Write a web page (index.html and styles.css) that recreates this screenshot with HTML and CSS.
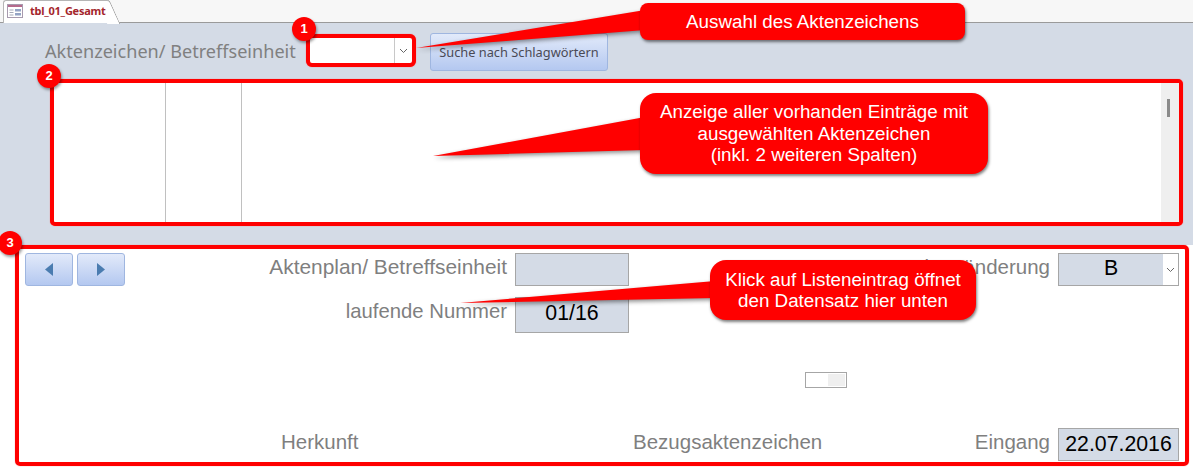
FILE: index.html
```html
<!DOCTYPE html>
<html lang="de">
<head>
<meta charset="utf-8">
<title>tbl_01_Gesamt</title>
<link rel="stylesheet" href="styles.css">
</head>
<body>
<div class="page">
  <div class="tabbar">
    <div class="tab">
      <svg class="tab-icon" width="16" height="14" viewBox="0 0 16 14">
        <rect x="0.5" y="0.5" width="15" height="13" fill="#fff" stroke="#a79aae"/>
        <rect x="1" y="1" width="14" height="2" fill="#b56a8c"/>
        <path d="M2.5 6h4M2.5 8.500h4M2.5 11h4" stroke="#a4a8b6" fill="none"/>
        <rect x="8" y="5" width="6" height="2.500" fill="#93a3c4"/>
        <rect x="8" y="9" width="6" height="2.500" fill="#93a3c4"/>
      </svg>
      <span>tbl_01_Gesamt</span>
    </div>
  </div>

  <header class="head">
    <div class="search-row">
      <span class="head-label">Aktenzeichen/ Betreffseinheit</span>
      <div class="frame-combo">
        <div class="combo-value"></div>
        <div class="combo-arrow">
          <svg width="9" height="6" viewBox="0 0 9 6"><path d="M1 1l3.500 3.500L8 1" fill="none" stroke="#666"/></svg>
        </div>
      </div>
      <button class="search-btn" type="button">Suche nach Schlagwörtern</button>
    </div>
    <div class="list-frame">
      <div class="list-col"></div>
      <div class="list-col"></div>
      <div class="list-col list-col-main"></div>
      <div class="scrollbar"><div class="thumb"></div></div>
    </div>
  </header>

  <main class="form-wrap">
    <div class="form-frame">
      <div class="cell-first">
        <div class="nav">
          <button class="nav-btn" type="button" aria-label="Zurück">
            <svg width="8" height="13" viewBox="0 0 8 13"><path d="M8 0v13L0 6.500z" fill="#4a7cb0"/></svg>
          </button>
          <button class="nav-btn" type="button" aria-label="Weiter">
            <svg width="8" height="13" viewBox="0 0 8 13"><path d="M0 0v13l8-6.500z" fill="#4a7cb0"/></svg>
          </button>
        </div>
        <span class="label label-plan">Aktenplan/ Betreffseinheit</span>
      </div>
      <div class="field"></div>
      <span class="label label-end">Aktenänderung</span>
      <div class="field field-combo">
        <span class="field-text">B</span>
        <div class="field-arrow">
          <svg width="9" height="6" viewBox="0 0 9 6"><path d="M1 1l3.500 3.500L8 1" fill="none" stroke="#666"/></svg>
        </div>
      </div>

      <span class="label label-end label-num">laufende Nummer</span>
      <div class="field field-text-center field-number">01/16</div>
      <div class="spacer-cell"></div>

      <div class="toggle"><div class="toggle-thumb"></div></div>

      <span class="label label-herkunft">Herkunft</span>
      <div class="bottom-mid">
        <span class="label">Bezugsaktenzeichen</span>
        <span class="label">Eingang</span>
      </div>
      <div class="field field-text-center">22.07.2016</div>
    </div>
  </main>

  <svg class="pointers" width="1193" height="468" viewBox="0 0 1193 468">
    <polygon points="416,48 645,10 645,30"/>
    <polygon points="433,156 645,117 645,150"/>
    <polygon points="460,303 715,281 715,298"/>
  </svg>
  <div class="callout callout-1">Auswahl des Aktenzeichens</div>
  <div class="callout callout-2">Anzeige aller vorhanden Einträge mit<br>ausgewählten Aktenzeichen<br>(inkl. 2 weiteren Spalten)</div>
  <div class="callout callout-3">Klick auf Listeneintrag öffnet<br>den Datensatz hier unten</div>
  <div class="badge badge-1">1</div>
  <div class="badge badge-2">2</div>
  <div class="badge badge-3">3</div>
</div>
</body>
</html>
```
FILE: styles.css
```css
* { box-sizing: border-box; }
html, body { margin: 0; padding: 0; background: #fff; }
body { font-family: "Liberation Sans", Arial, sans-serif; }
.page { position: relative; width: 1193px; height: 468px; overflow: hidden; }

.tabbar {
  height: 23px;
  background: #f7f7f7;
  border-bottom: 1px solid #9a9a9a;
  padding-left: 3px;
}
.tab {
  position: relative;
  display: flex;
  align-items: center;
  gap: 7px;
  width: 106px;
  height: 23px;
  padding: 0 0 3px 3px;
  background: #fff;
  border: 1px solid #b5b5b5;
  border-right: 0;
  border-bottom: 0;
  border-radius: 3px 0 0 0;
  font: bold 11px "Noto Sans", sans-serif;
  letter-spacing: -0.25px;
  color: #a4262c;
  white-space: nowrap;
}
.tab::after {
  content: "";
  position: absolute;
  top: -1px;
  right: -6px;
  width: 12px;
  height: 23px;
  background: #fff;
  border-right: 1px solid #9a9a9a;
  border-top: 1px solid #b5b5b5;
  border-radius: 0 3px 0 0;
  transform: skewX(24deg);
}
.tab span { position: relative; z-index: 1; }
.tab-icon { flex: none; }

.head {
  height: 222px;
  background: #d4dbe6;
  padding: 10px 10px 0 50px;
}
.search-row { display: flex; align-items: flex-start; height: 46px; }
.head-label {
  width: 261px;
  margin: 5px 0 0 -5px;
  font: 18.100px "Noto Sans", sans-serif;
  line-height: 26px;
  color: #808080;
  white-space: nowrap;
}
.frame-combo {
  display: flex;
  width: 110px;
  height: 33px;
  margin-top: 1px;
  border: 4px solid #f00;
  border-radius: 6px;
  background: #fff;
  box-shadow: 0 0 1px #f55;
}
.combo-value { flex: 1; }
.combo-arrow {
  width: 18px;
  display: flex;
  align-items: center;
  justify-content: center;
  border-left: 1px solid #c8c8c8;
}
.search-btn {
  margin-left: 14px;
  width: 178px;
  height: 38px;
  padding: 0;
  border: 1px solid #9fb6e0;
  border-radius: 3px;
  background: linear-gradient(#e2eafa, #b4c8f0);
  font: 12.800px "Noto Sans", sans-serif;
  color: #4a4a55;
}

.list-frame {
  display: grid;
  grid-template-columns: 112px 76px 1fr 18px;
  width: 1133px;
  height: 147px;
  background: #fff;
  border: 4px solid #f00;
  border-radius: 5px;
  box-shadow: 0 0 1px #f55;
}
.list-col { border-right: 1px solid #c0c0c0; }
.list-col-main { border-right: 0; }
.scrollbar { background: #efefef; padding: 16px 6px 0 6px; }
.thumb { width: 3px; height: 18px; background: #8a8a8a; }

.form-wrap { height: 223px; padding: 0 4px 2px 15px; background: #fff; }
.form-frame {
  display: grid;
  grid-template-columns: 482px 114px 413px 121px;
  grid-template-rows: 33px 34px auto 33px;
  column-gap: 8px;
  row-gap: 13px;
  height: 221px;
  padding: 4px 0 0 6px;
  border: 4px solid #f00;
  border-radius: 5px;
  box-shadow: 0 0 1px #f55;
  align-content: start;
}
.cell-first { display: flex; justify-content: space-between; align-items: flex-start; }
.nav { display: flex; gap: 4px; }
.nav-btn {
  width: 48px;
  height: 33px;
  padding: 0;
  border: 1px solid #9fb6e0;
  border-radius: 3px;
  background: linear-gradient(#e2eafa, #b4c8f0);
  display: flex;
  align-items: center;
  justify-content: center;
}
.label {
  font-size: 20.500px;
  line-height: 28px;
  color: #7f7f7f;
  white-space: nowrap;
}
.label-plan { font-size: 20.900px; }
.label-end { text-align: right; }
.label-num { font-size: 20.300px; line-height: 24px; }
.field {
  background: #d4dbe6;
  border: 1px solid #a6a6a6;
  color: #000;
  font-size: 21.300px;
}
.field-text-center { display: flex; align-items: center; justify-content: center; }
.field-number { margin-top: -2px; padding-bottom: 3px; }
.field-combo { display: flex; }
.field-text { flex: 1; text-align: center; line-height: 28px; }
.field-arrow {
  width: 15px;
  background: #fff;
  display: flex;
  align-items: center;
  justify-content: center;
}
.spacer-cell { grid-column: span 2; }

.toggle {
  grid-column: 3;
  margin: 26px 0 27px 168px;
  width: 42px;
  height: 16px;
  border: 1px solid #a6a6a6;
  background: #fff;
  padding: 1px 1px 1px 22px;
}
.toggle-thumb { height: 100%; background: #efefef; }

.label-herkunft { grid-column: 1; padding-left: 256px; }
.bottom-mid {
  grid-column: 2 / span 2;
  display: flex;
  justify-content: space-between;
  padding-left: 118px;
}

.pointers { position: absolute; left: 0; top: 0; pointer-events: none; filter: drop-shadow(1px 2px 2px rgba(0,0,0,.45)); }
.pointers polygon { fill: #f00; }

.callout {
  position: absolute;
  display: flex;
  align-items: center;
  justify-content: center;
  text-align: center;
  background: #f00;
  color: #fff;
  font-size: 18.800px;
  line-height: 21.500px;
  box-shadow: 1px 2px 3px rgba(0,0,0,.5);
}
.callout-1 { left: 640px; top: 3px; width: 325px; height: 37px; border-radius: 8px; }
.callout-2 { left: 640px; top: 93px; width: 348px; height: 81px; border-radius: 16px; }
.callout-3 { left: 710px; top: 260px; width: 266px; height: 60px; border-radius: 16px; }

.badge {
  position: absolute;
  width: 24px;
  height: 24px;
  border-radius: 50%;
  background: #f00;
  color: #fff;
  font: bold 13px/24px "Liberation Sans", sans-serif;
  text-align: center;
  box-shadow: 1px 2px 3px rgba(0,0,0,.4);
}
.badge-1 { left: 292px; top: 17px; }
.badge-2 { left: 37px; top: 64px; }
.badge-3 { left: -2px; top: 231px; }
```
